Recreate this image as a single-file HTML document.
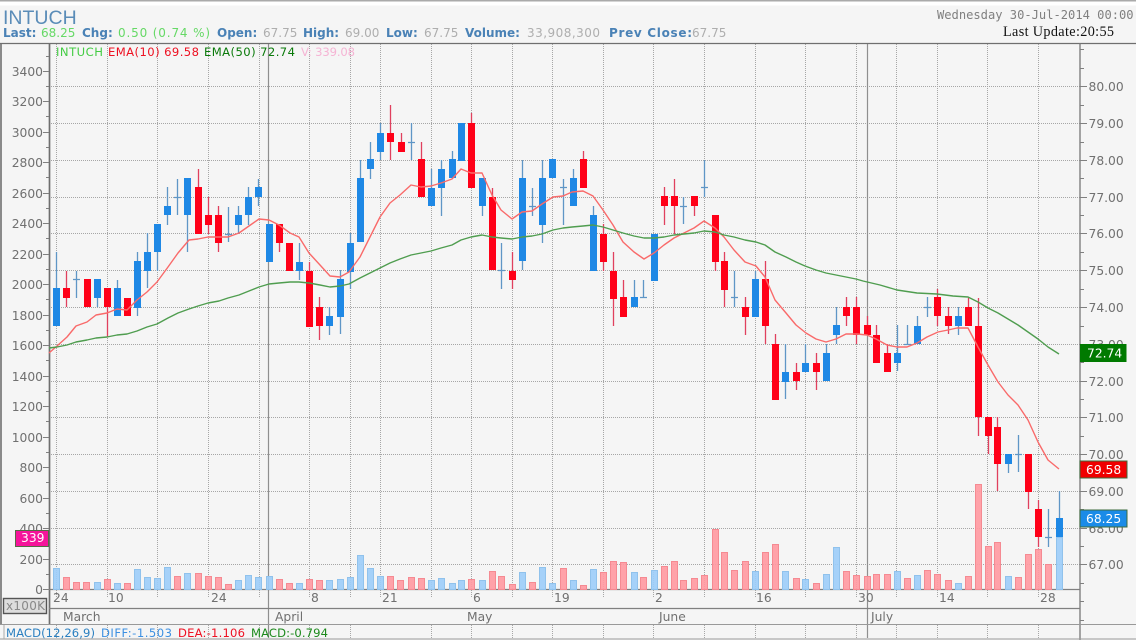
<!DOCTYPE html>
<html><head><meta charset="utf-8"><title>INTUCH</title>
<style>
html,body{margin:0;padding:0;background:#f5f5f5;width:1136px;height:640px;overflow:hidden}
svg{display:block;position:absolute;left:0;top:0;filter:blur(.35px)}
text{font-family:"DejaVu Sans","Liberation Sans",sans-serif}
.ax{font-size:12.3px;fill:#707070}
.st{font-size:12px}
.b{font-weight:bold;fill:#4a82b6}
.g{fill:#aeaeae}
</style></head><body>
<svg width="1136" height="640" viewBox="0 0 1136 640" xmlns="http://www.w3.org/2000/svg">
<rect width="1136" height="640" fill="#f5f5f5"/>
<rect width="1136" height="1.5" fill="#aaa"/>
<rect y="1.5" width="1136" height="4" fill="#fff"/>

<!-- header -->
<text x="3" y="24" style="font-family:'Liberation Sans',sans-serif;font-size:19.5px" fill="#5a8cb8">INTUCH</text>
<g class="st">
<text x="3" y="37" class="b">Last:</text><text x="41" y="37" fill="#66d966">68.25</text>
<text x="82" y="37" class="b">Chg:</text><text x="118" y="37" fill="#66d966" textLength="92">0.50 (0.74 %)</text>
<text x="217" y="37" class="b">Open:</text><text x="263" y="37" class="g">67.75</text>
<text x="303" y="37" class="b">High:</text><text x="345" y="37" class="g">69.00</text>
<text x="386" y="37" class="b">Low:</text><text x="424" y="37" class="g">67.75</text>
<text x="465" y="37" class="b">Volume:</text><text x="527" y="37" class="g" textLength="73">33,908,300</text>
<text x="609" y="37" class="b" textLength="83">Prev Close:</text><text x="692" y="37" class="g">67.75</text>
</g>
<text x="937" y="19" style="font-family:'DejaVu Sans Mono',monospace;font-size:12.1px" fill="#808080">Wednesday 30-Jul-2014 00:00</text>
<text x="1003" y="36" style="font-family:'Liberation Serif',serif;font-size:14.2px" fill="#111" textLength="111">Last Update:20:55</text>

<!-- grid -->
<g stroke="#a6a6a6" stroke-width="1" stroke-dasharray="1 1" fill="none">
<path d="M49 86.5H1080M49 123.5H1080M49 160.5H1080M49 197.5H1080M49 233.5H1080M49 270.5H1080M49 307.5H1080M49 344.5H1080M49 381.5H1080M49 417.5H1080M49 454.5H1080M49 491.5H1080M49 528.5H1080M49 564.5H1080"/>
<path d="M56.5 44V598M107.5 44V598M157.5 44V598M208.5 44V598M259.5 44V598M309.5 44V598M350.5 44V598M380.5 44V598M431.5 44V598M471.5 44V598M512.5 44V598M552.5 44V598M603.5 44V598M653.5 44V598M704.5 44V598M755.5 44V598M805.5 44V598M856.5 44V598M896.5 44V598M937.5 44V598M987.5 44V598M1038.5 44V598"/>
<path d="M56.5 625V638M107.5 625V638M157.5 625V638M208.5 625V638M259.5 625V638M309.5 625V638M350.5 625V638M431.5 625V638M471.5 625V638M512.5 625V638M552.5 625V638M603.5 625V638M653.5 625V638M704.5 625V638M755.5 625V638M805.5 625V638M856.5 625V638M896.5 625V638M937.5 625V638M987.5 625V638M1038.5 625V638"/>
</g>
<path d="M268.5 44V638M867.5 44V638" stroke="#8f8f8f" stroke-width="1.2" fill="none"/>

<!-- frame -->
<path d="M0 43.5H1136" stroke="#6f6f6f" stroke-width="1.3"/>
<path d="M1 43V625" stroke="#6f6f6f" stroke-width="1.6"/>
<path d="M49.5 43V625" stroke="#6f6f6f" stroke-width="1.7"/>
<path d="M1080 43V640" stroke="#777" stroke-width="1.3"/>
<path d="M49 589.5H1080M49 608.5H1080" stroke="#808080" stroke-width="1.3"/>
<path d="M0 624.5H1136" stroke="#999" stroke-width="1"/>
<path d="M0 639H1136" stroke="#999" stroke-width="1"/>
<path d="M4 625V639" stroke="#aaa" stroke-width="1"/>

<!-- left axis -->
<g stroke="#808080" stroke-width="1" fill="none">
<path d="M43 71.5h6M43 101.5h6M43 132.5h6M43 162.5h6M43 193.5h6M43 223.5h6M43 254.5h6M43 284.5h6M43 315.5h6M43 345.5h6M43 376.5h6M43 406.5h6M43 437.5h6M43 467.5h6M43 498.5h6M43 528.5h6M43 559.5h6M43 589.5h6"/>
<path d="M46 56.5h3M46 86.5h3M46 116.5h3M46 147.5h3M46 177.5h3M46 208.5h3M46 238.5h3M46 269.5h3M46 299.5h3M46 330.5h3M46 360.5h3M46 391.5h3M46 421.5h3M46 452.5h3M46 482.5h3M46 513.5h3M46 543.5h3M46 574.5h3"/>
<path d="M1080 86.5h7M1080 123.5h7M1080 160.5h7M1080 197.5h7M1080 233.5h7M1080 270.5h7M1080 307.5h7M1080 344.5h7M1080 381.5h7M1080 417.5h7M1080 454.5h7M1080 491.5h7M1080 528.5h7M1080 564.5h7"/>
<path d="M1080 49.5h4M1080 68.5h4M1080 105.5h4M1080 142.5h4M1080 178.5h4M1080 215.5h4M1080 252.5h4M1080 289.5h4M1080 326.5h4M1080 362.5h4M1080 399.5h4M1080 436.5h4M1080 473.5h4M1080 509.5h4M1080 546.5h4M1080 583.5h4M1080 601.5h4M1080 620.5h4"/>
</g>
<g class="ax" text-anchor="end">
<text x="43" y="76">3400</text><text x="43" y="106">3200</text><text x="43" y="137">3000</text><text x="43" y="167">2800</text><text x="43" y="198">2600</text><text x="43" y="228">2400</text><text x="43" y="259">2200</text><text x="43" y="289">2000</text><text x="43" y="320">1800</text><text x="43" y="350">1600</text><text x="43" y="381">1400</text><text x="43" y="411">1200</text><text x="43" y="442">1000</text><text x="43" y="472">800</text><text x="43" y="503">600</text><text x="43" y="533">400</text><text x="43" y="564">200</text><text x="43" y="594">0</text>
</g>
<g class="ax">
<text x="1088.5" y="91">80.00</text><text x="1088.5" y="128">79.00</text><text x="1088.5" y="165">78.00</text><text x="1088.5" y="202">77.00</text><text x="1088.5" y="238">76.00</text><text x="1088.5" y="275">75.00</text><text x="1088.5" y="312">74.00</text><text x="1088.5" y="349">73.00</text><text x="1088.5" y="386">72.00</text><text x="1088.5" y="422">71.00</text><text x="1088.5" y="459">70.00</text><text x="1088.5" y="496">69.00</text><text x="1088.5" y="533">68.00</text><text x="1088.5" y="569">67.00</text>
</g>

<!-- volume -->
<g stroke-width="1">
<path fill="#ff9aa2" stroke="#f58a92" fill-opacity=".92" d="M63.5 577.5h6v12h-6zM73.5 582.5h6v7h-6zM83.5 582.5h6v7h-6zM104.5 579.5h6v10h-6zM124.5 583.5h6v6h-6zM174.5 576.5h6v13h-6zM195.5 573.5h6v16h-6zM205.5 576.5h6v13h-6zM215.5 577.5h6v12h-6zM225.5 584.5h6v5h-6zM276.5 579.5h6v10h-6zM286.5 583.5h6v6h-6zM306.5 579.5h6v10h-6zM316.5 580.5h6v9h-6zM387.5 576.5h6v13h-6zM397.5 580.5h6v9h-6zM408.5 577.5h6v12h-6zM418.5 578.5h6v11h-6zM468.5 579.5h6v10h-6zM489.5 571.5h6v18h-6zM498.5 576.5h6v13h-6zM509.5 584.5h6v5h-6zM529.5 582.5h6v7h-6zM560.5 568.5h6v21h-6zM580.5 585.5h6v4h-6zM600.5 572.5h6v17h-6zM610.5 561.5h6v28h-6zM620.5 562.5h6v27h-6zM640.5 577.5h6v12h-6zM661.5 566.5h6v23h-6zM671.5 561.5h6v28h-6zM680.5 580.5h6v9h-6zM691.5 578.5h6v11h-6zM701.5 575.5h6v14h-6zM712.5 529.5h6v60h-6zM721.5 552.5h6v37h-6zM731.5 570.5h6v19h-6zM742.5 561.5h6v28h-6zM762.5 552.5h6v37h-6zM772.5 544.5h6v45h-6zM793.5 578.5h6v11h-6zM813.5 583.5h6v6h-6zM843.5 571.5h6v18h-6zM853.5 575.5h6v14h-6zM864.5 576.5h6v13h-6zM873.5 574.5h6v15h-6zM884.5 574.5h6v15h-6zM904.5 578.5h6v11h-6zM924.5 570.5h6v19h-6zM934.5 574.5h6v15h-6zM945.5 580.5h6v9h-6zM965.5 576.5h6v13h-6zM975.5 484.5h6v105h-6zM985.5 546.5h6v43h-6zM994.5 542.5h6v47h-6zM1015.5 577.5h6v12h-6zM1025.5 554.5h6v35h-6zM1035.5 549.5h6v40h-6zM1045.5 564.5h6v25h-6z"/>
<path fill="#9dcdf8" stroke="#90c2ec" fill-opacity=".92" d="M53.5 568.5h6v21h-6zM94.5 582.5h6v7h-6zM114.5 583.5h6v6h-6zM134.5 569.5h6v20h-6zM144.5 577.5h6v12h-6zM154.5 578.5h6v11h-6zM164.5 567.5h6v22h-6zM184.5 573.5h6v16h-6zM235.5 580.5h6v9h-6zM245.5 575.5h6v14h-6zM255.5 577.5h6v12h-6zM266.5 576.5h6v13h-6zM296.5 583.5h6v6h-6zM326.5 580.5h6v9h-6zM337.5 579.5h6v10h-6zM347.5 577.5h6v12h-6zM357.5 555.5h6v34h-6zM367.5 568.5h6v21h-6zM377.5 576.5h6v13h-6zM428.5 580.5h6v9h-6zM438.5 578.5h6v11h-6zM449.5 583.5h6v6h-6zM458.5 580.5h6v9h-6zM479.5 580.5h6v9h-6zM519.5 572.5h6v17h-6zM539.5 567.5h6v22h-6zM549.5 583.5h6v6h-6zM570.5 580.5h6v9h-6zM590.5 569.5h6v20h-6zM631.5 572.5h6v17h-6zM651.5 570.5h6v19h-6zM752.5 571.5h6v18h-6zM782.5 571.5h6v18h-6zM802.5 579.5h6v10h-6zM823.5 574.5h6v15h-6zM833.5 547.5h6v42h-6zM894.5 571.5h6v18h-6zM914.5 575.5h6v14h-6zM955.5 583.5h6v6h-6zM1005.5 576.5h6v13h-6zM1056.5 537.5h6v52h-6z"/>
</g>

<!-- wicks -->
<path fill="none" stroke="#5f96c6" stroke-width="1.3" d="M56.5 252V326M76.5 271V298M97.5 279V307M117.5 280V316M137.5 252V316M147.5 233V288M157.5 224V271M167.5 187V225M177.5 179V215M187.5 178V252M228.5 207V242M238.5 206V234M248.5 187V225M258.5 179V206M299.5 243V280M329.5 307V335M340.5 270V334M350.5 233V289M360.5 160V242M370.5 142V179M380.5 123V160M411.5 123V160M431.5 169V206M441.5 160V216M452.5 151V178M482.5 178V216M501.5 243V289M522.5 160V270M532.5 188V216M542.5 160V243M563.5 179V225M573.5 169V206M593.5 206V271M634.5 280V307M643.5 280V297M683.5 197V224M704.5 160V197M734.5 271V307M755.5 271V317M785.5 344V399M805.5 344V372M826.5 344V381M836.5 307V344M897.5 325V371M907.5 325V344M917.5 316V344M927.5 297V317M958.5 307V335M1008.5 454V473M1018.5 435V472M1048.5 509V547M1059.5 491V537"/>
<path fill="none" stroke="#5f96c6" stroke-width="1.2" d="M73 279.5h7M174 197.5h7M225 234.5h7M408 142.5h7M498 270.5h7M529 206.5h7M560 187.5h7M640 297.5h7M680 206.5h7M701 187.5h7M731 297.5h7M904 344.5h7M924 307.5h7M1015 454.5h7M1045 537.5h7"/>
<path fill="none" stroke="#e0405e" stroke-width="1.3" d="M66.5 271V307M107.5 288V337M198.5 169V234M208.5 197V234M218.5 206V252M279.5 224V252M309.5 262V327M319.5 297V340M390.5 105V160M401.5 133V152M421.5 142V197M471.5 113V188M492.5 188V270M512.5 252V289M583.5 151V188M603.5 224V271M613.5 252V326M623.5 280V317M664.5 187V225M674.5 179V234M694.5 196V216M715.5 215V271M724.5 252V307M745.5 297V335M765.5 261V344M775.5 334V400M796.5 363V390M816.5 353V390M846.5 297V326M856.5 297V344M867.5 316V335M876.5 325V363M887.5 344V372M937.5 289V326M948.5 307V334M968.5 298V326M978.5 298V436M988.5 417V454M997.5 417V491M1028.5 454V509M1038.5 500V547"/>

<!-- bodies -->
<path fill="#1e88e5" d="M53 288h7v38h-7zM94 279h7v19h-7zM114 288h7v28h-7zM134 261h7v47h-7zM144 252h7v19h-7zM154 224h7v28h-7zM164 206h7v9h-7zM184 178h7v37h-7zM235 215h7v10h-7zM245 197h7v18h-7zM255 187h7v10h-7zM266 224h7v38h-7zM296 262h7v9h-7zM326 316h7v10h-7zM337 279h7v38h-7zM347 243h7v29h-7zM357 178h7v64h-7zM367 159h7v10h-7zM377 133h7v19h-7zM428 188h7v18h-7zM438 169h7v19h-7zM449 159h7v19h-7zM458 123h7v38h-7zM479 178h7v28h-7zM519 178h7v83h-7zM539 178h7v47h-7zM549 159h7v19h-7zM570 178h7v28h-7zM590 215h7v56h-7zM631 297h7v10h-7zM651 234h7v47h-7zM752 279h7v38h-7zM782 372h7v10h-7zM802 363h7v9h-7zM823 353h7v28h-7zM833 325h7v10h-7zM894 353h7v10h-7zM914 326h7v18h-7zM955 316h7v10h-7zM1005 454h7v10h-7zM1056 518h7v19h-7z"/>
<path fill="#ff0018" d="M63 288h7v10h-7zM84 279h7v28h-7zM104 288h7v19h-7zM124 298h7v18h-7zM195 187h7v47h-7zM205 215h7v10h-7zM215 215h7v28h-7zM276 224h7v19h-7zM286 243h7v28h-7zM306 271h7v56h-7zM316 307h7v19h-7zM387 133h7v9h-7zM398 142h7v10h-7zM418 159h7v38h-7zM468 123h7v65h-7zM489 197h7v73h-7zM509 271h7v9h-7zM580 159h7v29h-7zM600 234h7v28h-7zM610 271h7v28h-7zM620 297h7v20h-7zM661 196h7v10h-7zM671 196h7v10h-7zM691 196h7v10h-7zM712 215h7v47h-7zM721 261h7v29h-7zM742 307h7v10h-7zM762 279h7v47h-7zM772 344h7v56h-7zM793 372h7v9h-7zM813 363h7v9h-7zM843 307h7v9h-7zM853 307h7v28h-7zM864 325h7v10h-7zM873 335h7v28h-7zM884 353h7v19h-7zM934 297h7v19h-7zM945 316h7v10h-7zM965 307h7v19h-7zM975 326h7v91h-7zM985 417h7v19h-7zM994 427h7v37h-7zM1025 454h7v38h-7zM1035 509h7v28h-7z"/>

<!-- EMA lines -->
<polyline fill="none" stroke="#f96a6a" stroke-width="1.4" stroke-linejoin="round" points="49,353 57,346 67,337 76,326 87,322 96,315 107,313 117,309 127,310 137,300 147,292 157,282 168,267 178,253 189,240 198,239 208,237 219,237 228,237 239,233 249,226 259,219 269,220 279,225 290,233 299,237 309,253 320,265 330,276 340,277 349,272 360,257 370,237 380,217 390,203 400,195 411,185 421,187 431,186 441,183 452,179 461,169 471,173 482,173 492,195 501,210 512,219 522,212 532,211 542,204 553,197 563,196 572,192 583,191 593,196 603,210 613,225 623,242 634,252 644,259 654,253 664,245 674,238 684,233 694,228 704,221 715,228 724,237 734,250 745,262 756,266 765,277 775,300 786,313 796,325 806,333 816,339 826,342 836,339 846,334 857,334 867,335 876,339 887,345 897,347 907,347 917,343 927,337 938,332 948,330 957,328 968,328 978,347 988,365 998,382 1008,395 1018,405 1028,420 1038,442 1048,460 1059,469"/>
<polyline fill="none" stroke="#4f9d4f" stroke-width="1.4" stroke-linejoin="round" points="49,348 57,347 67,345 76,342 87,340 96,338 107,337 117,335 127,334 137,331 147,327 157,324 168,318 178,313 189,309 198,306 208,303 219,301 228,298 239,295 249,291 259,287 269,284 279,283 290,282 299,282 309,283 320,285 330,287 340,286 349,284 360,278 370,273 380,268 390,263 400,259 411,255 421,253 431,251 441,248 452,245 461,240 471,237 482,235 492,237 501,238 512,239 522,237 532,236 542,234 553,230 563,228 572,227 583,226 593,225 603,227 613,230 623,233 634,236 644,238 654,238 664,237 674,235 684,234 694,233 704,231 715,232 724,235 734,237 745,240 756,242 765,245 775,252 786,257 796,262 805,266 816,270 826,273 836,275 846,277 856,279 863,281 880,285 897,290 917,293 937,294 953,296 968,297 978,302 988,308 998,313 1008,319 1018,325 1028,332 1038,339 1048,347 1059,354"/>

<!-- legend -->
<g style="font-size:11.6px">
<text x="56" y="56" fill="#44cc44" textLength="47">INTUCH</text>
<text x="108" y="56" fill="#ee1122" textLength="91">EMA(10) 69.58</text>
<text x="204" y="56" fill="#0a7a0a" textLength="91">EMA(50) 72.74</text>
<text x="301" y="56" fill="#f5b4d4" textLength="54">V: 339.08</text>
</g>

<!-- axis value boxes -->
<rect x="1080" y="344" width="46.5" height="18" fill="#007a00"/>
<text x="1087" y="357.5" font-size="12.3" fill="#fff">72.74</text>
<rect x="1080" y="461" width="47" height="17" fill="#f00000" stroke="#3d6b3d"/>
<text x="1086" y="474" font-size="12.3" fill="#fff">69.58</text>
<rect x="1080" y="510" width="47" height="17" fill="#1a8be8" stroke="#3d6b3d"/>
<text x="1086" y="523" font-size="12.3" fill="#fff">68.25</text>
<rect x="15.5" y="530.5" width="33" height="16" fill="#f5149b" stroke="#556b44"/>
<text x="21" y="542" font-size="12.3" fill="#fff">339</text>
<rect x="3.5" y="598.5" width="43" height="15" fill="#ddd" stroke="#555" stroke-width="1.4"/>
<text x="6" y="610" font-size="12" fill="#888" textLength="39">x100K</text>

<!-- x labels -->
<g class="ax">
<text x="53" y="602">24</text><text x="108" y="602">10</text><text x="211" y="602">24</text><text x="311" y="602">8</text><text x="382" y="602">21</text><text x="473" y="602">6</text><text x="554" y="602">19</text><text x="655" y="602">2</text><text x="756" y="602">16</text><text x="858" y="602">30</text><text x="939" y="602">14</text><text x="1040" y="602">28</text>
<text x="63" y="621">March</text><text x="275" y="621">April</text><text x="467" y="621">May</text><text x="659" y="621">June</text><text x="871" y="621">July</text>
</g>

<!-- macd -->
<g style="font-size:11.6px">
<text x="6" y="637" fill="#2a7fc0" textLength="89">MACD(12,26,9)</text>
<text x="101" y="637" fill="#3c90e2" textLength="71">DIFF:-1.503</text>
<text x="178" y="637" fill="#ee1122" textLength="67">DEA:-1.106</text>
<text x="251" y="637" fill="#1c8a1c" textLength="77">MACD:-0.794</text>
</g>
</svg>
</body></html>
